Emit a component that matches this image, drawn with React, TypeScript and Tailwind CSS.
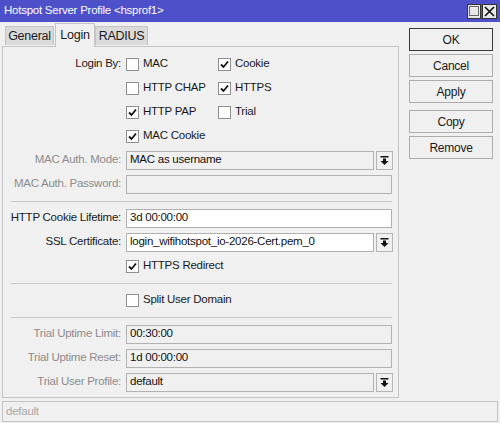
import React from "react";

function Check({ on }: { on?: boolean }) {
  return (
    <span className="flex h-[13px] w-[13px] shrink-0 items-center justify-center border border-[#8f8f8f] bg-white">
      {on && (
        <svg width="9" height="9" viewBox="0 0 9 9">
          <path d="M1 4.5 L3.5 7 L8 1.5" fill="none" stroke="#111" strokeWidth="1.8" />
        </svg>
      )}
    </span>
  );
}

function CheckItem({ on, label, w = "w-[92px]" }: { on?: boolean; label: string; w?: string }) {
  return (
    <div className={`flex items-center gap-[4px] ${w}`}>
      <Check on={on} />
      <span className="whitespace-nowrap text-[#1a1a1a]">{label}</span>
    </div>
  );
}

function DropBtn() {
  return (
    <div className="ml-[2px] flex h-[19px] w-[17px] items-center justify-center border border-[#b4b4b4] bg-[#f0f0f0]">
      <svg width="9" height="9" viewBox="0 0 9 9">
        <rect x="0.5" y="0" width="8" height="1.5" fill="#111" />
        <path d="M3 2.5 H6 V5 H8.5 L4.5 9 L0.5 5 H3 Z" fill="#111" />
      </svg>
    </div>
  );
}

function Field({ value, white, drop }: { value?: string; white?: boolean; drop?: boolean }) {
  return (
    <div className="flex items-center">
      <div
        className={`flex h-[19px] items-center whitespace-nowrap border border-[#b1b1b1] pl-[3px] text-[#111] ${drop ? "w-[248px]" : "w-[266px]"} ${white ? "bg-white" : "bg-[#f0f0f0]"}`}
      >
        {value}
      </div>
      {drop && <DropBtn />}
    </div>
  );
}

function Row({
  label,
  dim,
  children,
}: {
  label?: string;
  dim?: boolean;
  children: React.ReactNode;
}) {
  return (
    <div className="flex h-[24px] items-center">
      <div
        className={`w-[119px] whitespace-nowrap pr-[1px] text-right ${dim ? "text-[#8c8c8c]" : "text-[#1a1a1a]"}`}
      >
        {label}
      </div>
      <div className="ml-[4px] flex items-center">{children}</div>
    </div>
  );
}

function Sep() {
  return (
    <div className="flex h-[10px] items-center pl-[8px] pr-[6px]">
      <div className="h-[1px] w-full bg-[#c8c8c8]" />
    </div>
  );
}

function Btn({ label, main }: { label: string; main?: boolean }) {
  return (
    <div
      className={`flex h-[23px] items-center justify-center border bg-[#f0f0f0] text-[12px] text-[#1a1a1a] ${main ? "border-[#3a3a3a]" : "border-[#adadad]"}`}
    >
      {label}
    </div>
  );
}

export default function App() {
  return (
    <div
      className="flex h-[423px] w-[500px] flex-col overflow-hidden bg-[#f0f0f0] text-[11.5px] leading-none tracking-[-0.25px]"
      style={{ fontFamily: '"Liberation Sans", Arial, sans-serif' }}
    >
      {/* title bar */}
      <div className="flex h-[22px] shrink-0 items-center justify-between bg-[#4d50c8] pl-[4px] pr-[3px]">
        <span className="text-[11.5px] text-white">Hotspot Server Profile &lt;hsprof1&gt;</span>
        <div className="flex gap-[1px]">
          <div className="flex h-[15px] w-[14px] items-center justify-center border border-[#333] bg-[#e8e8e8]">
            <div className="h-[10px] w-[10px] border border-[#666]" />
          </div>
          <div className="flex h-[15px] w-[15px] items-center justify-center border border-[#333] bg-[#e8e8e8]">
            <svg width="11" height="11" viewBox="0 0 11 11">
              <path d="M1 1 L10 10 M10 1 L1 10" stroke="#111" strokeWidth="1.6" />
            </svg>
          </div>
        </div>
      </div>

      <div className="flex pl-[2px]">
        {/* left: tabs + panel */}
        <div className="flex w-[397px] flex-col">
          <div className="flex h-[24px] items-end pl-[3px]">
            <div className="mb-[1px] flex h-[19px] w-[49px] items-center justify-center border border-b-0 border-[#c4c4c4] bg-[#dadada] text-[12.5px] text-[#1a1a1a]">
              General
            </div>
            <div className="relative -mb-[1px] ml-[1px] flex h-[24px] w-[40px] items-center justify-center border border-b-0 border-[#c4c4c4] bg-[#f0f0f0] text-[12.5px] text-[#1a1a1a]">
              Login
            </div>
            <div className="mb-[1px] flex h-[19px] w-[53px] items-center justify-center border border-b-0 border-[#c4c4c4] bg-[#dadada] text-[12.5px] text-[#1a1a1a]">
              RADIUS
            </div>
          </div>
          <div className="flex h-[352px] flex-col border border-[#c4c4c4] pt-[5px]">
            <Row label="Login By:">
              <CheckItem label="MAC" />
              <CheckItem label="Cookie" on />
            </Row>
            <Row>
              <CheckItem label="HTTP CHAP" />
              <CheckItem label="HTTPS" on />
            </Row>
            <Row>
              <CheckItem label="HTTP PAP" on />
              <CheckItem label="Trial" />
            </Row>
            <Row>
              <CheckItem label="MAC Cookie" on />
            </Row>
            <Row label="MAC Auth. Mode:" dim>
              <Field value="MAC as username" drop />
            </Row>
            <Row label="MAC Auth. Password:" dim>
              <Field />
            </Row>
            <Sep />
            <Row label="HTTP Cookie Lifetime:">
              <Field value="3d 00:00:00" white />
            </Row>
            <Row label="SSL Certificate:">
              <Field value="login_wifihotspot_io-2026-Cert.pem_0" white drop />
            </Row>
            <Row>
              <CheckItem label="HTTPS Redirect" on w="w-[150px]" />
            </Row>
            <Sep />
            <Row>
              <CheckItem label="Split User Domain" w="w-[150px]" />
            </Row>
            <Sep />
            <Row label="Trial Uptime Limit:" dim>
              <Field value="00:30:00" />
            </Row>
            <Row label="Trial Uptime Reset:" dim>
              <Field value="1d 00:00:00" />
            </Row>
            <Row label="Trial User Profile:" dim>
              <Field value="default" drop />
            </Row>
          </div>
        </div>

        {/* right: buttons */}
        <div className="ml-[10px] mt-[6px] flex w-[84px] flex-col gap-[3px]">
          <Btn label="OK" main />
          <Btn label="Cancel" />
          <Btn label="Apply" />
          <div className="mt-[4px] flex flex-col gap-[3px]">
            <Btn label="Copy" />
            <Btn label="Remove" />
          </div>
        </div>
      </div>

      {/* status bar */}
      <div className="mx-[2px] mt-[3px] flex h-[21px] items-center border border-[#c4c4c4] pl-[3px] text-[#a8a8a8]">
        default
      </div>
    </div>
  );
}
